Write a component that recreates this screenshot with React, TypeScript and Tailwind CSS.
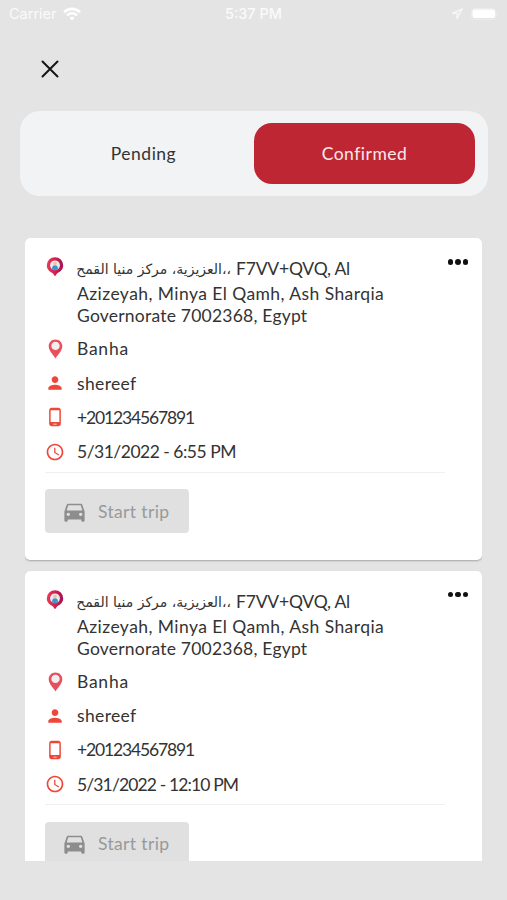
import React from 'react';
import { MdAccessTime, MdDirectionsCar, MdPerson, MdPhoneAndroid } from 'react-icons/md';

type Trip = { name: string; phone: string; date: string; dateClass: string };

const trips: Trip[] = [
  { name: 'shereef', phone: '+201234567891', date: '5/31/2022 - 6:55 PM', dateClass: 'tracking-[-0.5px]' },
  { name: 'shereef', phone: '+201234567891', date: '5/31/2022 - 12:10 PM', dateClass: 'tracking-[-0.87px]' },
];

function StatusBar() {
  return (
    <header className="grid h-7 grid-cols-3 items-center pl-[9px] pr-[9px] font-[Inter,sans-serif] text-[14.5px] text-[#fafafa]">
      <div className="flex items-center gap-[6px]">
        <span>Carrier</span>
        <svg width="18" height="14" viewBox="0 0 18 14" fill="none" stroke="white" strokeWidth="2.6">
          <path d="M1 5.2C5.6.8 12.4.8 17 5.2M4 8.4c3-2.7 7-2.7 10 0" />
          <path d="M6.4 10.7c1.6-1.4 3.6-1.4 5.2 0L9 13.4z" fill="white" stroke="none" />
        </svg>
      </div>
      <span className="text-center font-medium">5:37 PM</span>
      <div className="flex items-center justify-end gap-2">
        <svg width="12" height="12" viewBox="0 0 11 11" fill="none" stroke="#f7f7f7" strokeWidth="1.2">
          <path d="M10 1 1 5h4.600v4.800z" />
        </svg>
        <svg width="27" height="12" viewBox="0 0 27 12">
          <rect x=".5" y=".5" width="24" height="11" rx="3" fill="none" stroke="#ececec" />
          <rect x="1.500" y="1.500" width="22.500" height="8.500" rx="2" fill="white" />
          <path d="M25.500 4v4c1.400-.5 1.400-3.500 0-4" fill="#eee" />
        </svg>
      </div>
    </header>
  );
}

function RiderPin() {
  return (
    <svg width="18" height="20" viewBox="0 0 18 20">
      <defs>
        <linearGradient id="rider-pin" x1="0" x2="1">
          <stop offset="0" stopColor="#ee3a58" />
          <stop offset=".5" stopColor="#d51f50" />
          <stop offset="1" stopColor="#a01554" />
        </linearGradient>
      </defs>
      <path d="M9 .2a8.200 8.200 0 0 0-8.200 8.200c0 3.600 2.500 6.200 5.700 7.500L9 19.200l2.500-3.300c3.200-1.300 5.700-3.900 5.700-7.500A8.200 8.200 0 0 0 9 .2z" fill="url(#rider-pin)" />
      <circle cx="9" cy="8.300" r="4.900" fill="#e6ebf2" />
      <path d="M6 12.100c0-2.500.8-3.800 3-3.800s3 1.300 3 3.800c-1.600 1.500-4.400 1.500-6 0z" fill="#3d94c8" />
      <circle cx="9" cy="6.400" r="1.800" fill="#efc49c" />
    </svg>
  );
}

function PlacePin() {
  return (
    <svg width="15" height="20" viewBox="0 0 15 20">
      <path d="M7.500.5C3.600.5.700 3.400.700 7.200c0 4.700 4.700 8.500 6.800 12.300 2.100-3.800 6.800-7.600 6.800-12.300C14.300 3.400 11.400.5 7.500.5z" fill="#e7505f" />
      <circle cx="7.500" cy="6.900" r="4.200" fill="#f1eeef" />
    </svg>
  );
}

function InfoRow({ icon, className, children }: { icon: React.ReactNode; className: string; children: React.ReactNode }) {
  return (
    <div className="flex h-[34.200px] items-center gap-3">
      <span className="flex w-5 shrink-0 justify-center">{icon}</span>
      <span className={`pt-px ${className}`}>{children}</span>
    </div>
  );
}

function TripCard({ trip }: { trip: Trip }) {
  return (
    <article className="h-[322px] shrink-0 rounded-[5px] bg-white pl-5 pr-[14px] pt-[19px] shadow-[0_1px_2px_rgba(0,0,0,0.28)]">
      <div className="flex h-[75px] items-start">
        <span className="mr-3 flex w-5 shrink-0 justify-center">
          <RiderPin />
        </span>
        <div className="flex-1 whitespace-nowrap">
          <div className="flex h-[25px] items-center">
            <span dir="rtl" className="w-[154px] shrink-0 text-right font-['DejaVu_Sans',sans-serif] text-[14px]">،،العزيزية، مركز منيا القمح</span>
            <span className="ml-[5px] tracking-[-0.2px]">F7VV+QVQ, Al</span>
          </div>
          <div className="h-[22px] pt-px leading-[22px] tracking-[0.43px]">Azizeyah, Minya El Qamh, Ash Sharqia</div>
          <div className="h-[22px] pt-px leading-[22px] tracking-[0.22px]">Governorate 7002368, Egypt</div>
        </div>
        <button aria-label="More" className="mt-[2px] flex gap-[2px]">
          <i className="size-[5.500px] rounded-full bg-[#111]" />
          <i className="size-[5.500px] rounded-full bg-[#111]" />
          <i className="size-[5.500px] rounded-full bg-[#111]" />
        </button>
      </div>
      <InfoRow icon={<PlacePin />} className="tracking-[0.75px]">Banha</InfoRow>
      <InfoRow icon={<MdPerson className="size-5 text-[#ee4638]" />} className="tracking-[0.35px]">{trip.name}</InfoRow>
      <InfoRow icon={<MdPhoneAndroid className="size-5 text-[#ee4638]" />} className="tracking-[-1.15px]">{trip.phone}</InfoRow>
      <InfoRow icon={<MdAccessTime className="size-5 text-[#ee4638]" />} className={trip.dateClass}>{trip.date}</InfoRow>
      <div className="mr-[23px] mt-[3px] h-px bg-[#f0f0f0]" />
      <button className="mt-[16.500px] flex h-11 w-36 items-center rounded bg-[#e0e0e0] pl-[16px] text-[#999]">
        <MdDirectionsCar className="mr-[10px] size-[27px] text-[#8d8d8d]" />
        <span className="pt-px tracking-[0.35px]">Start trip</span>
      </button>
    </article>
  );
}

export default function App() {
  return (
    <main className="flex h-[900px] w-[507px] flex-col overflow-hidden bg-[#e4e4e4] font-[Lato,sans-serif] text-[17.500px] text-[#333]">
      <StatusBar />
      <button aria-label="Close" className="ml-[41px] mt-8 size-[18px]">
        <svg width="18" height="18" viewBox="0 0 18 18" stroke="#151515" strokeWidth="2" strokeLinecap="round">
          <path d="m1.500 1.500 15 15m0-15-15 15" />
        </svg>
      </button>
      <nav className="ml-5 mt-[33px] flex h-[85px] w-[468px] shrink-0 rounded-[20px] bg-[#f1f3f5] p-3">
        <button className="ml-px flex-1 pt-[2px] tracking-[0.5px]">Pending</button>
        <button className="mr-px w-[221px] rounded-[18px] bg-[#be2633] pt-[2px] tracking-[0.5px] text-[#fbe9ea]">Confirmed</button>
      </nav>
      <section className="ml-[25px] mt-[42px] flex h-[623px] w-[457px] shrink-0 flex-col gap-[10.500px] overflow-hidden">
        {trips.map((trip) => (
          <TripCard key={trip.date} trip={trip} />
        ))}
      </section>
    </main>
  );
}
